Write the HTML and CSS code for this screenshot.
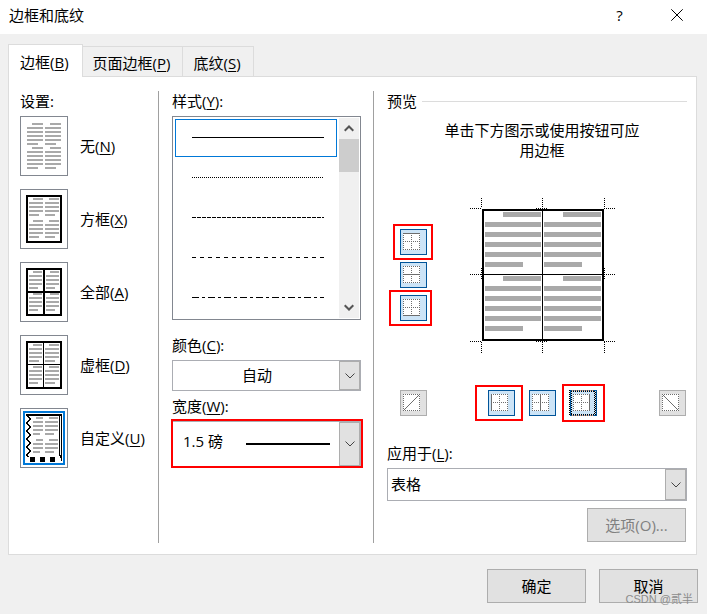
FILE: index.html
```html
<!DOCTYPE html>
<html lang="zh-CN">
<head>
  <meta charset="UTF-8">
  <meta name="viewport" content="width=device-width, initial-scale=1">
  <title>边框和底纹</title>
  <link rel="stylesheet" href="styles.css">
</head>
<body>

<header class="titlebar">
  <h1>边框和底纹</h1>
  <button type="button" class="title-btn" aria-label="帮助">?</button>
  <button type="button" class="title-btn" aria-label="关闭">
    <svg width="12" height="12" viewBox="0 0 12 12"><path d="M.3 .3l11.400 11.400M11.700 .3L.3 11.700" stroke="#000"/></svg>
  </button>
</header>

<main class="dialog">
  <nav class="tabs">
    <button type="button" class="tab active">边框(<u>B</u>)</button>
    <button type="button" class="tab">页面边框(<u>P</u>)</button>
    <button type="button" class="tab">底纹(<u>S</u>)</button>
  </nav>

  <div class="panel">
    <!-- Settings -->
    <section class="col settings">
      <h2 class="label">设置:</h2>
      <div class="setting-list">
        <button type="button" class="setting">
          <svg class="thumb" viewBox="0 0 48 60">
            <path class="text" d="M12 8h11M30 8h11M7 12h16M25 12h16M7 16h16M25 16h16M7 20h16M25 20h16M7 24h16M25 24h16M7 28h11M25 28h11M12 32h11M30 32h11M7 36h16M25 36h16M7 40h16M25 40h16M7 44h16M25 44h16M7 48h16M25 48h16M7 52h11M25 52h11"/>
            <rect class="edge" x=".5" y=".5" width="47" height="59"/>
          </svg>
          <span>无(<u>N</u>)</span>
        </button>
        <button type="button" class="setting">
          <svg class="thumb" viewBox="0 0 48 60">
            <path class="text" d="M13 10h10M29 10h10M9 14h14M25 14h14M9 18h14M25 18h14M9 22h14M25 22h14M9 26h10M25 26h10M13 32h10M29 32h10M9 36h14M25 36h14M9 40h14M25 40h14M9 44h14M25 44h14M9 48h10M25 48h10"/>
            <rect class="line" x="7" y="7" width="34" height="46"/>
            <rect class="edge" x=".5" y=".5" width="47" height="59"/>
          </svg>
          <span>方框(<u>X</u>)</span>
        </button>
        <button type="button" class="setting">
          <svg class="thumb" viewBox="0 0 48 60">
            <path class="text" d="M13 10h9M30 10h9M9 14h13M26 14h13M9 18h13M26 18h13M9 22h13M26 22h13M9 26h9M26 26h9M13 32h9M30 32h9M9 36h13M26 36h13M9 40h13M26 40h13M9 44h13M26 44h13M9 48h9M26 48h9"/>
            <path class="line" d="M7 7h34v46H7zM24 7v46M7 30h34"/>
            <rect class="edge" x=".5" y=".5" width="47" height="59"/>
          </svg>
          <span>全部(<u>A</u>)</span>
        </button>
        <button type="button" class="setting">
          <svg class="thumb" viewBox="0 0 48 60">
            <path class="text" d="M13 10h9M29 10h10M9 14h13M25 14h14M9 18h13M25 18h14M9 22h13M25 22h14M9 26h10M25 26h10M13 32h9M29 32h10M9 36h13M25 36h14M9 40h13M25 40h14M9 44h13M25 44h14M9 48h9M25 48h10"/>
            <rect class="line" x="7" y="7" width="34" height="46"/>
            <path class="line thin" d="M23.5 7v46M7 29.5h34"/>
            <rect class="edge" x=".5" y=".5" width="47" height="59"/>
          </svg>
          <span>虚框(<u>D</u>)</span>
        </button>
        <button type="button" class="setting">
          <svg class="thumb" viewBox="0 0 48 60">
            <path class="text" d="M16 10h7M29 10h9M13 14h10M25 14h13M13 18h10M25 18h13M13 22h10M25 22h13M13 26h7M25 26h9M16 32h7M29 32h9M13 36h10M25 36h13M13 40h10M25 40h13M13 44h7M25 44h9"/>
            <path class="line" d="M6 7h36"/>
            <path class="line thin" d="M39.5 8v40M41.5 8v45M40.5 47v3"/>
            <path class="line thin" d="M7.500 8l3 3-4 4 4 4-4 4 4 4-4 4 4 4-4 4 4 4-4 4 2 2"/>
            <path d="M10 49h5v5h-5zM20 49h5v5h-5zM30 49h5v5h-5z"/>
            <rect class="chosen" x="4" y="4" width="40" height="52"/>
            <rect class="edge" x=".5" y=".5" width="47" height="59"/>
          </svg>
          <span>自定义(<u>U</u>)</span>
        </button>
      </div>
    </section>

    <!-- Style, colour and width -->
    <section class="col styles">
      <h2 class="label">样式(<u>Y</u>):</h2>
      <div class="listbox">
        <ul>
          <li class="selected"><svg class="rule"><path d="M0 .5h132"/></svg></li>
          <li><svg class="rule"><path d="M0 .5h132" stroke-dasharray="1 1"/></svg></li>
          <li><svg class="rule"><path d="M0 .5h132" stroke-dasharray="4 1"/></svg></li>
          <li><svg class="rule"><path d="M0 .5h132" stroke-dasharray="4 4"/></svg></li>
          <li><svg class="rule"><path d="M0 .5h132" stroke-dasharray="7 3 3 3"/></svg></li>
        </ul>
        <div class="scrollbar">
          <button type="button" aria-label="向上"><svg width="10" height="7" viewBox="0 0 10 7"><path d="M.7 5.800L5 1.500l4.300 4.300"/></svg></button>
          <div class="scroll-thumb"></div>
          <button type="button" aria-label="向下"><svg width="10" height="7" viewBox="0 0 10 7"><path d="M.7 1.200L5 5.500l4.300-4.300"/></svg></button>
        </div>
      </div>

      <label class="label" for="color">颜色(<u>C</u>):</label>
      <div class="combo color">
        <select id="color"><option>自动</option></select>
        <span class="arrow"><svg width="10" height="6" viewBox="0 0 10 6"><path d="M.5 .5L5 5 9.500 .5"/></svg></span>
      </div>

      <label class="label" for="width">宽度(<u>W</u>):</label>
      <div class="combo width">
        <select id="width"><option>1.5 磅</option></select>
        <span class="weight"></span>
        <span class="arrow"><svg width="10" height="6" viewBox="0 0 10 6"><path d="M.5 .5L5 5 9.500 .5"/></svg></span>
        <span class="mark"></span>
      </div>
    </section>

    <!-- Preview -->
    <section class="col preview">
      <h2 class="label legend">预览</h2>
      <div class="preview-grid">
        <p>单击下方图示或使用按钮可应<br>用边框</p>

        <div class="side">
          <span class="slot top">
            <button type="button" class="edge-btn" aria-label="上框线"><svg viewBox="0 0 17 17"><path class="dots" d="M.5 0v17M16.500 0v17M8.500 0v17M0 8.500h17M0 16.500h17"/><path d="M0 .5h17"/></svg></button>
            <span class="mark"></span>
          </span>
          <span class="slot">
            <button type="button" class="edge-btn" aria-label="内部横框线"><svg viewBox="0 0 17 17"><path class="dots" d="M.5 0v17M16.500 0v17M8.500 0v17M0 .5h17M0 16.500h17"/><path d="M0 8.500h17"/></svg></button>
          </span>
          <span class="slot bottom">
            <button type="button" class="edge-btn" aria-label="下框线"><svg viewBox="0 0 17 17"><path class="dots" d="M.5 0v17M16.500 0v17M8.500 0v17M0 .5h17M0 8.500h17"/><path d="M0 16.500h17"/></svg></button>
            <span class="mark"></span>
          </span>
        </div>

        <svg class="sheet" width="145" height="155" viewBox="0 0 145 155">
          <g class="bars">
            <path d="M33 16.500h38M93 16.500h38M15 26.500h56M74 26.500h57M15 36.500h56M74 36.500h57M15 46.500h56M74 46.500h57M15 56.500h56M74 56.500h57M15 66.500h38M74 66.500h38"/>
            <path d="M33 80.500h38M93 80.500h38M15 90.500h56M74 90.500h57M15 100.500h56M74 100.500h57M15 110.500h56M74 110.500h57M15 120.500h56M74 120.500h57M15 130.500h38M74 130.500h38"/>
          </g>
          <rect class="line" x="13" y="12" width="120" height="130"/>
          <path class="line thin" d="M72.500 12v130M13 76.500h120"/>
          <path class="crop" d="M11.500 0v10M72.500 0v10M134.500 0v10M0 10.500h12M66 10.500h12M134 10.500h11M0 76.500h12M134 76.500h11M11.500 70v12M134.500 70v12M0 143.500h12M66 143.500h12M134 143.500h11M11.500 144v11M72.500 144v11M134.500 144v11"/>
        </svg>

        <button type="button" class="edge-btn off" aria-label="斜上框线"><svg viewBox="0 0 17 17"><path class="dots" d="M.5 0v17M16.500 0v17M0 .5h17M0 16.500h17"/><path class="diagonal" d="M.5 16.500l16-16"/></svg></button>
        <div class="below">
          <span class="slot left">
            <button type="button" class="edge-btn" aria-label="左框线"><svg viewBox="0 0 17 17"><path class="dots" d="M16.500 0v17M8.500 0v17M0 .5h17M0 8.500h17M0 16.500h17"/><path d="M.5 0v17"/></svg></button>
            <span class="mark"></span>
          </span>
          <span class="slot">
            <button type="button" class="edge-btn" aria-label="内部竖框线"><svg viewBox="0 0 17 17"><path class="dots" d="M.5 0v17M16.500 0v17M0 .5h17M0 8.500h17M0 16.500h17"/><path d="M8.500 0v17"/></svg></button>
          </span>
          <span class="slot right">
            <button type="button" class="edge-btn" aria-label="右框线"><svg viewBox="0 0 17 17"><path class="dots" d="M.5 0v17M8.500 0v17M0 .5h17M0 8.500h17M0 16.500h17"/><path d="M16.500 0v17"/></svg></button>
            <svg class="focus" width="28" height="26" viewBox="0 0 28 26">
              <path d="M2 1.500h24M2 24.500h24M.5 0v26M2.500 1v24M25.500 1v24"/>
              <path d="M26.500 2v23"/>
              <path class="warm" d="M3 .5h22M3 25.500h22"/>
            </svg>
            <span class="mark"></span>
          </span>
        </div>
        <button type="button" class="edge-btn off" aria-label="斜下框线"><svg viewBox="0 0 17 17"><path class="dots" d="M.5 0v17M16.500 0v17M0 .5h17M0 16.500h17"/><path class="diagonal" d="M.5 .5l16 16"/></svg></button>
      </div>

      <label class="label" for="apply">应用于(<u>L</u>):</label>
      <div class="combo apply">
        <select id="apply"><option>表格</option></select>
        <span class="arrow"><svg width="10" height="6" viewBox="0 0 10 6"><path d="M.5 .5L5 5 9.500 .5"/></svg></span>
      </div>
      <button type="button" class="btn options" disabled>选项(O)...</button>
    </section>
  </div>

  <footer class="actions">
    <button type="button" class="btn">确定</button>
    <button type="button" class="btn">取消</button>
    <span class="watermark">CSDN @贰半</span>
  </footer>
</main>

</body>
</html>
```
FILE: styles.css
```css
* {
  box-sizing: border-box;
}

body {
  margin: 0;
  min-height: 100vh;
  background: #f0f0f0;
  color: #000;
  font-family: "Open Sans", "Noto Sans CJK SC", sans-serif;
  font-size: 15px;
  line-height: 20px;
}

button,
select {
  font: inherit;
  color: inherit;
  padding: 0;
  margin: 0;
  border: 0;
  border-radius: 0;
  background: none;
}

svg {
  display: block;
  fill: none;
}

u {
  text-underline-offset: 2px;
  text-decoration-thickness: 1px;
}

/* Title bar */
.titlebar {
  display: flex;
  align-items: center;
  height: 34px;
  padding: 0 2px 4px 9px;
  background: #fff;
}

.titlebar h1 {
  flex: 1;
  margin: 0;
  font-size: 15px;
  font-weight: 400;
}

.title-btn {
  display: flex;
  align-items: center;
  justify-content: center;
  width: 57px;
  height: 30px;
}

.dialog {
  padding: 10px 9px 11px 8px;
}

/* Tabs */
.tabs {
  display: flex;
  align-items: flex-end;
}

.tab {
  height: 30px;
  padding: 2px 12px 0 10px;
  border: 1px solid #dcdcdc;
  border-width: 1px 1px 0 0;
}

.tab.active {
  position: relative;
  height: 33px;
  margin-bottom: -1px;
  padding: 2px 13px 0 11px;
  border-left-width: 1px;
  background: #fff;
}

.panel {
  display: flex;
  margin-right: 1px;
  padding: 14px 9px 11px 11px;
  border: 1px solid #dcdcdc;
  background: #fff;
}

.label {
  display: block;
  margin: 0 0 5px;
  font-size: 15px;
  font-weight: 400;
  line-height: 20px;
}

/* Settings */
.settings {
  flex: 0 0 139px;
  border-right: 1px solid #a0a0a0;
}

.setting-list {
  display: flex;
  flex-direction: column;
  gap: 13px;
}

.setting {
  display: flex;
  align-items: center;
  gap: 12px;
  text-align: left;
}

.thumb {
  width: 48px;
  height: 60px;
  shape-rendering: crispEdges;
}

.thumb path {
  fill: #000;
}

.thumb .text {
  stroke: #a9a9a9;
  stroke-width: 2;
}

.line,
.thumb .line {
  fill: none;
  stroke: #000;
  stroke-width: 2;
}

.line.thin,
.thumb .line.thin {
  stroke-width: 1;
}

.thumb .edge {
  stroke: #828790;
}

.thumb .chosen {
  stroke: #0078d7;
  stroke-width: 2;
}

/* Style, colour and width */
.styles {
  flex: 0 0 215px;
  padding: 0 12px 0 13px;
  border-right: 1px solid #a0a0a0;
}

.listbox {
  display: flex;
  margin-bottom: 15px;
  border: 1px solid #828790;
}

.listbox ul {
  flex: 1;
  display: flex;
  flex-direction: column;
  gap: 2px;
  margin: 0;
  padding: 2px;
  list-style: none;
}

.listbox li {
  display: flex;
  align-items: center;
  height: 38px;
  padding: 0 12px 2px 16px;
  border: 1px solid transparent;
}

.listbox li.selected {
  border-color: #0078d7;
}

.rule {
  width: 132px;
  height: 1px;
  stroke: #000;
  shape-rendering: crispEdges;
}

.scrollbar {
  display: flex;
  flex-direction: column;
  width: 20px;
  margin: 1px 1px 1px 0;
  background: #f0f0f0;
}

.scrollbar button {
  display: flex;
  align-items: center;
  justify-content: center;
  height: 21px;
}

.scrollbar button:last-child {
  margin-top: auto;
}

.scrollbar path {
  stroke: #555;
  stroke-width: 2;
}

.scroll-thumb {
  height: 33px;
  background: #cdcdcd;
}

.combo {
  position: relative;
  border: 1px solid #abadb3;
  background: #fff;
}

.combo select {
  appearance: none;
  display: block;
  width: 100%;
  height: 100%;
  padding: 0 22px 2px 3px;
}

.combo .arrow {
  position: absolute;
  top: 0;
  right: 0;
  bottom: 0;
  display: flex;
  align-items: center;
  justify-content: center;
  width: 21px;
  border: 1px solid #adadad;
  background: #e1e1e1;
  pointer-events: none;
}

.arrow path {
  stroke: #444;
}

.color {
  height: 31px;
  margin-bottom: 5px;
}

.color select {
  text-align: center;
  text-align-last: center;
}

.width {
  height: 46px;
}

.width select {
  padding: 0 22px 6px 10px;
}

.weight {
  position: absolute;
  top: 21px;
  right: 30px;
  width: 84px;
  height: 2px;
  background: #000;
}

/* Red call-out frames */
.mark {
  position: absolute;
  border: 2px solid #f00;
  pointer-events: none;
}

.width .mark {
  inset: -3px -3px -2px -2px;
}

.top .mark {
  inset: -5px -6px -5px -7px;
}

.bottom .mark {
  inset: -5px -5px -5px -11px;
}

.left .mark {
  inset: -5px -8px -5px -13px;
}

.right .mark {
  inset: -6px -8px -6px -8px;
}

/* Preview */
.preview {
  flex: 1;
  padding-left: 13px;
}

.legend {
  display: flex;
  align-items: center;
  gap: 5px;
}

.legend::after {
  content: "";
  flex: 1;
  height: 1px;
  background: #dcdcdc;
}

.preview-grid {
  display: grid;
  grid-template-columns: 27px 1fr 27px;
  row-gap: 37px;
  margin: 0 1px 27px 13px;
  padding-top: 4px;
}

.preview-grid p {
  grid-column: 1 / -1;
  margin: 0 2px 1px 0;
  text-align: center;
}

.side {
  display: flex;
  flex-direction: column;
  align-self: center;
  gap: 7px;
  padding-bottom: 2px;
}

.sheet {
  grid-column: 2 / -1;
  margin-left: 43px;
  shape-rendering: crispEdges;
}

.bars {
  stroke: #a9a9a9;
  stroke-width: 5;
}

.crop {
  stroke: #000;
  stroke-dasharray: 1 1;
}

.below {
  display: flex;
  justify-content: center;
  gap: 14px;
  padding-right: 2px;
}

.slot {
  position: relative;
}

.edge-btn {
  display: block;
  width: 27px;
  height: 26px;
  padding: 3px 6px 4px 2px;
  border: 1px solid #005499;
  background: #cce4f7;
}

.edge-btn svg {
  width: 17px;
  height: 17px;
  background: #fff;
  stroke: #6d6d6d;
  shape-rendering: crispEdges;
}

.edge-btn .dots {
  stroke-dasharray: 1 1;
}

.edge-btn .diagonal {
  shape-rendering: auto;
}

.edge-btn.off {
  border-color: #adadad;
  background: #e1e1e1;
}

.focus {
  position: absolute;
  top: 0;
  left: -1px;
  stroke: #000;
  stroke-dasharray: 1 1;
  shape-rendering: crispEdges;
  pointer-events: none;
}

.focus .warm {
  stroke: #ff9a57;
}

.apply {
  height: 33px;
}

.btn {
  width: 99px;
  height: 34px;
  padding-bottom: 1px;
  border: 1px solid #adadad;
  background: #e1e1e1;
}

.options {
  display: block;
  margin: 7px 1px 1px auto;
  color: #808080;
}

/* Bottom buttons */
.actions {
  position: relative;
  display: flex;
  justify-content: flex-end;
  gap: 13px;
  margin-top: 14px;
}

.watermark {
  position: absolute;
  right: 5px;
  bottom: -6px;
  color: #8c8c8c;
  font-family: "Liberation Sans", "Noto Sans CJK SC", sans-serif;
  font-size: 11px;
}
```
